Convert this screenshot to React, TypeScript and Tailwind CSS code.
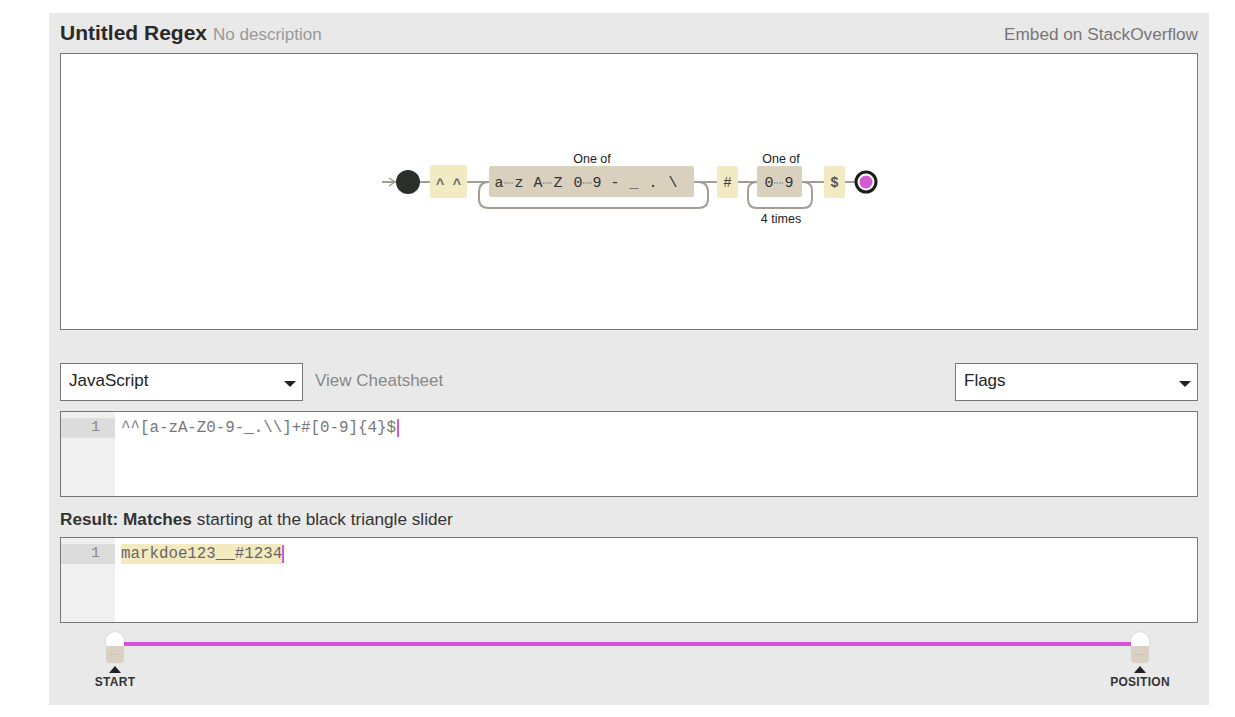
import React from 'react';

const sans = { fontFamily: '"Liberation Sans", Arial, sans-serif' };
const mono = { fontFamily: '"Liberation Mono", "Courier New", monospace' };

function Range({ a, b, x1, x2 }: { a: string; b: string; x1: number; x2: number }) {
  return (
    <g>
      <text x={x1} y="187" textAnchor="middle" fontSize="15" fill="#333" style={mono}>{a}</text>
      <line x1={x1 + 5} y1="183" x2={x2 - 5} y2="183" stroke="#777" strokeWidth="1.2" strokeDasharray="1.5 1" />
      <text x={x2} y="187" textAnchor="middle" fontSize="15" fill="#333" style={mono}>{b}</text>
    </g>
  );
}

function Glyph({ x, c }: { x: number; c: string }) {
  return <text x={x} y="187" textAnchor="middle" fontSize="15" fill="#333" style={mono}>{c}</text>;
}

function Diagram() {
  const line = '#a39d93';
  return (
    <svg viewBox="61 54 1136 275" className="block w-full h-full">
      {/* entry arrow */}
      <line x1="382" y1="182" x2="396" y2="182" stroke={line} strokeWidth="2" />
      <path d="M389 178 L395 182 L389 186" fill="none" stroke={line} strokeWidth="1.5" />
      <circle cx="408" cy="182" r="12" fill="#2b2f2b" />
      <line x1="420" y1="182" x2="430" y2="182" stroke={line} strokeWidth="2" />

      {/* ^^ */}
      <rect x="430" y="165" width="37" height="33" rx="2" fill="#f2eac2" />
      <text x="448.5" y="189" textAnchor="middle" fontSize="14" fontWeight="bold" fill="#666" style={mono}>^ ^</text>

      <line x1="467" y1="182" x2="489" y2="182" stroke={line} strokeWidth="2" />

      {/* char class */}
      <path d="M489 182 Q479 182 479 192 L479 199 Q479 208 489 208 L698 208 Q708 208 708 199 L708 192 Q708 182 698 182" fill="none" stroke={line} strokeWidth="2" />
      <text x="592" y="163" textAnchor="middle" fontSize="12.5" fill="#222" style={sans}>One of</text>
      <rect x="489" y="166" width="205" height="31" rx="2" fill="#d9d0be" />
      <Range a="a" b="z" x1={499} x2={519} />
      <Range a="A" b="Z" x1={538} x2={558} />
      <Range a="0" b="9" x1={578} x2={597} />
      <Glyph x={615} c="-" />
      <Glyph x={634} c="_" />
      <Glyph x={653} c="." />
      <Glyph x={673} c="\" />

      <line x1="694" y1="182" x2="717" y2="182" stroke={line} strokeWidth="2" />

      {/* # */}
      <rect x="717" y="166" width="21" height="32" rx="2" fill="#f2eac2" />
      <text x="727.5" y="187" textAnchor="middle" fontSize="14" fill="#444" style={mono}>#</text>

      <line x1="738" y1="182" x2="757" y2="182" stroke={line} strokeWidth="2" />

      {/* 0-9 four times */}
      <path d="M757 182 Q748 182 748 191 L748 199 Q748 208 757 208 L803 208 Q812 208 812 199 L812 191 Q812 182 803 182" fill="none" stroke={line} strokeWidth="2" />
      <text x="781" y="163" textAnchor="middle" fontSize="12.5" fill="#222" style={sans}>One of</text>
      <rect x="757" y="166" width="45" height="31" rx="2" fill="#d9d0be" />
      <Range a="0" b="9" x1={769} x2={789} />
      <text x="781" y="223" textAnchor="middle" fontSize="12.5" fill="#222" style={sans}>4 times</text>

      <line x1="802" y1="182" x2="824" y2="182" stroke={line} strokeWidth="2" />

      {/* $ */}
      <rect x="824" y="166" width="21" height="32" rx="2" fill="#f2eac2" />
      <text x="834.5" y="187" textAnchor="middle" fontSize="14" fontWeight="bold" fill="#555" style={mono}>$</text>

      <line x1="845" y1="182" x2="856" y2="182" stroke={line} strokeWidth="2" />
      <circle cx="866" cy="182" r="10" fill="#fff" stroke="#1c1c1c" strokeWidth="3" />
      <circle cx="866" cy="182" r="6.5" fill="#d45bd6" />
    </svg>
  );
}

function Select({ label }: { label: string }) {
  return (
    <div className="flex items-center justify-between w-[243px] h-[38px] bg-white border border-[#777] pl-2 pr-[6px]">
      <span className="text-[17px] text-[#222] -mt-[2px]" style={sans}>{label}</span>
      <span className="w-0 h-0 mt-[4px] border-l-[6px] border-r-[6px] border-t-[6px] border-l-transparent border-r-transparent border-t-[#222]" />
    </div>
  );
}

function Editor({ children }: { children: React.ReactNode }) {
  return (
    <div className="flex h-[86px] bg-white border border-[#777]">
      <div className="w-[54px] bg-[#f0f0f0] pt-[6px]">
        <div className="h-[20px] bg-[#dcdcdc] text-right pr-[15px] text-[15px] leading-[20px] text-[#888]" style={mono}>1</div>
      </div>
      <div className="pt-[6px] pl-[6px] text-[15.8px] leading-[20px] whitespace-pre flex items-start" style={mono}>
        {children}
      </div>
    </div>
  );
}

function Handle({ left, label }: { left: number; label: string }) {
  return (
    <div className="absolute top-[9px] flex flex-col items-center w-[60px]" style={{ left: left - 30 }}>
      <div className="relative flex flex-col items-center">
        <div className="w-[18px] h-[15px] rounded-t-full bg-white shadow-[0_0_2px_rgba(0,0,0,0.15)]" />
        <div className="w-[18px] h-[17px] -mt-[1px] rounded-b-[4px] bg-[#dad1c4] flex justify-center pt-[5px]">
          <span className="text-[8px] leading-none text-[#8a7f70] tracking-[1px]">···</span>
        </div>
      </div>
      <div className="mt-[3px] w-0 h-0 border-l-[6px] border-r-[6px] border-b-[7px] border-l-transparent border-r-transparent border-b-[#222]" />
      <div className="mt-[3px] text-[12px] font-bold leading-none text-[#333] tracking-[0.3px]" style={sans}>{label}</div>
    </div>
  );
}

export default function App() {
  return (
    <div className="w-[1235px] h-[717px] bg-white pt-[13px]" style={sans}>
      <div className="ml-[49px] w-[1160px] h-[692px] bg-[#e9e9e9] px-[11px]">
        {/* Header */}
        <div className="h-[40px] flex items-end justify-between pb-[5px]">
          <div className="flex items-baseline gap-[6px]">
            <span className="text-[21px] font-bold text-[#2a2a2a]">Untitled Regex</span>
            <span className="text-[17px] text-[#999]">No description</span>
          </div>
          <span className="text-[17.2px] text-[#777]">Embed on StackOverflow</span>
        </div>

        {/* Diagram */}
        <div className="h-[277px] bg-white border border-[#777]">
          <Diagram />
        </div>

        {/* Controls */}
        <div className="mt-[33px] flex items-center">
          <Select label="JavaScript" />
          <span className="ml-[12px] -mt-[2px] text-[17px] text-[#888]">View Cheatsheet</span>
          <div className="ml-auto">
            <Select label="Flags" />
          </div>
        </div>

        <div className="mt-[10px]">
          <Editor>
            <span className="text-[#777]">^^[a-zA-Z0-9-_.\\]+#[0-9]{'{'}4{'}'}$</span>
            <span className="ml-[1px] mt-[1px] w-[2px] h-[18px] bg-[#d45bd6]" />
          </Editor>
        </div>

        {/* Result */}
        <div className="h-[40px] flex items-center pt-[5px] text-[17.2px] text-[#333]">
          <span className="font-bold">Result: Matches</span>
          <span className="ml-[5px]">starting at the black triangle slider</span>
        </div>

        <Editor>
          <span className="text-[#666] bg-[#f3ebbf]">markdoe123__#1234</span>
          <span className="mt-[1px] w-[2px] h-[18px] bg-[#d45bd6]" />
        </Editor>

        {/* Slider */}
        <div className="relative h-[83px]">
          <div className="absolute top-[19px] left-[64px] w-[1008px] h-[4px] bg-[#d652d8]" />
          <Handle left={55} label="START" />
          <Handle left={1080} label="POSITION" />
        </div>
      </div>
    </div>
  );
}
